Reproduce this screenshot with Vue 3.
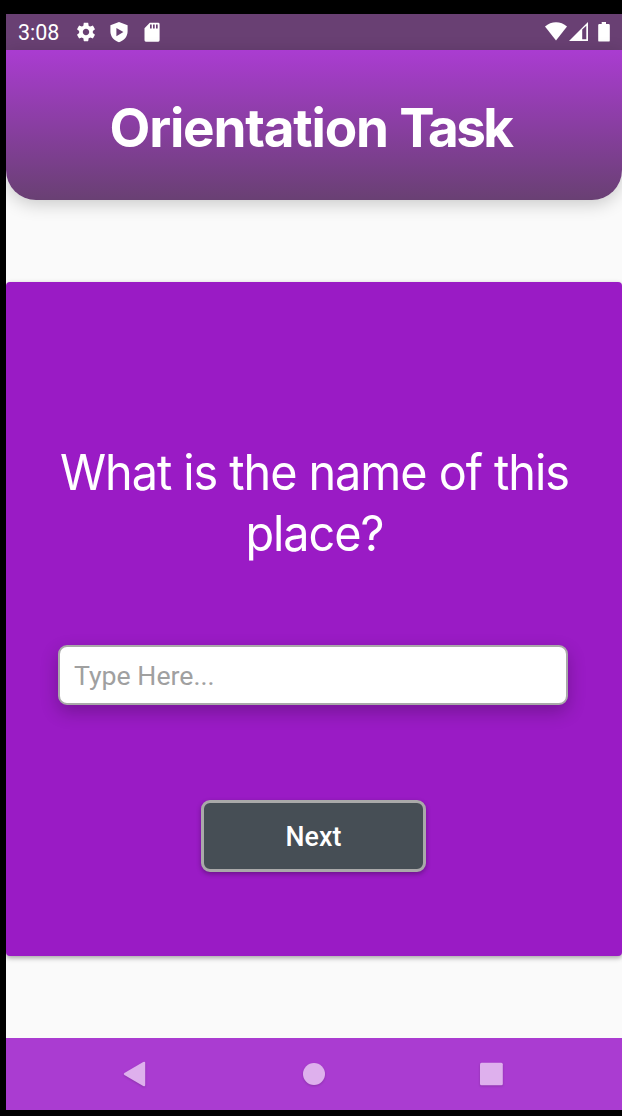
<script setup>
import { ref } from 'vue'

const answer = ref('')
</script>

<template>
  <div class="device">
    <main class="screen">
      <div class="status">
        <span class="clock">3:08</span>
        <svg class="gear" width="22" height="22" viewBox="0 0 24 24">
          <path d="M19.43 12.98c.04-.32.07-.64.07-.98s-.03-.66-.07-.98l2.11-1.65c.19-.15.24-.42.12-.64l-2-3.46c-.12-.22-.39-.3-.61-.22l-2.49 1c-.52-.4-1.08-.73-1.69-.98l-.38-2.65C14.46 2.18 14.25 2 14 2h-4c-.25 0-.46.18-.49.42l-.38 2.65c-.61.25-1.17.59-1.69.98l-2.49-1c-.23-.09-.49 0-.61.22l-2 3.46c-.13.22-.07.49.12.64l2.11 1.65c-.04.32-.07.65-.07.98s.03.66.07.98l-2.11 1.65c-.19.15-.24.42-.12.64l2 3.46c.12.22.39.3.61.22l2.49-1c.52.4 1.08.73 1.69.98l.38 2.65c.03.24.24.42.49.42h4c.25 0 .46-.18.49-.42l.38-2.65c.61-.25 1.17-.59 1.69-.98l2.49 1c.23.09.49 0 .61-.22l2-3.46c.12-.22.07-.49-.12-.64l-2.11-1.65zM12 15.5c-1.93 0-3.5-1.57-3.5-3.5s1.57-3.5 3.5-3.5 3.5 1.57 3.5 3.5-1.57 3.5-3.5 3.5z" />
        </svg>
        <svg class="shield" width="18" height="22" viewBox="0 0 18 22">
          <path fill-rule="evenodd" d="M9 1 17.6 4.3V10.5C17.6 15.6 14 19.6 9 21.2 4 19.6.4 15.6.4 10.5V4.3ZM6.4 7.1V15.2L13.4 11.1Z" />
        </svg>
        <svg class="card-icon" width="16" height="22" viewBox="0 0 16 22">
          <path fill-rule="evenodd" d="M5.8 1.8H14.2Q15.6 1.8 15.6 3.2V19.3Q15.6 20.7 14.2 20.7H1.9Q.5 20.7.5 19.3V7.2ZM6 3.6V7.6H7.7V3.6ZM9 3.6V7.6H10.7V3.6ZM12 3.6V7.6H13.7V3.6Z" />
        </svg>
        <svg class="wifi" width="22" height="20" viewBox="0 0 22 20">
          <path d="M0 4.4C6.2-1.3 15.8-1.3 22 4.4L11 18.4Z" />
        </svg>
        <svg class="signal" width="19" height="20" viewBox="0 0 19 20">
          <path fill-rule="evenodd" d="M0 19 19 0V19ZM13.2 7.6V17.3H17.3V3.8Z" />
        </svg>
        <svg class="battery" width="12" height="20" viewBox="0 0 12 20">
          <path d="M3.7 0H8V2H10.6Q11.8 2 11.8 3.2V18.4Q11.8 19.6 10.6 19.6H1.4Q.2 19.6.2 18.4V3.2Q.2 2 1.4 2H3.7Z" />
        </svg>
      </div>

      <header class="header">
        <h1>Orientation <span class="tight">Task</span></h1>
      </header>

      <section class="panel">
        <p class="question">What is the name of this<br />place?</p>
        <input v-model="answer" class="answer" type="text" placeholder="Type Here..." />
        <button class="next" type="button">Next</button>
      </section>

      <nav class="nav">
        <svg width="24" height="28" viewBox="0 0 24 28">
          <path d="M1.4 13.1 20.2 2.1Q22.2 1.2 22.2 3V25Q22.2 26.8 20.2 25.9L1.4 14.9Q0 14 1.4 13.1Z" />
        </svg>
        <svg width="24" height="28" viewBox="0 0 24 28"><circle cx="13" cy="14" r="11" /></svg>
        <svg width="24" height="28" viewBox="0 0 24 28"><rect x="1" y="2.7" width="22.8" height="22.6" rx="1.5" /></svg>
      </nav>
    </main>
  </div>
</template>

<style>
body {
  background: #000;
}
</style>

<style scoped>
.device {
  box-sizing: border-box;
  width: 622px;
  height: 1116px;
  padding: 14px 0 6px 6px;
  background: #000;
}
.screen {
  display: flex;
  flex-direction: column;
  height: 1096px;
  background: #fafafa;
  overflow: hidden;
}
.status {
  display: flex;
  align-items: center;
  flex: none;
  height: 36px;
  box-sizing: border-box;
  padding: 0 12px;
  background: #694073;
}
.status svg {
  flex: none;
  fill: #fff;
}
.clock {
  width: 57px;
  font: 21.5px/36px Roboto, sans-serif;
  color: #fff;
  padding-top: 2px;
}
.shield {
  margin-left: 13px;
}
.card-icon {
  margin-left: 16px;
}
.wifi {
  margin-left: auto;
}
.signal {
  margin-left: 2px;
}
.battery {
  margin-left: 10px;
}
.header {
  flex: none;
  height: 150px;
  border-radius: 0 0 30px 30px;
  background: linear-gradient(#aa3cd1, #694073);
  box-shadow: 0 4px 18px rgba(0, 0, 0, 0.2);
}
h1 {
  margin: 0;
  padding: 47px 7px 0 0;
  font: 700 53px/62px Inter, sans-serif;
  letter-spacing: -1.2px;
  text-align: center;
  color: #fff;
}
.tight {
  letter-spacing: -2.6px;
}
.panel {
  flex: none;
  display: flex;
  flex-direction: column;
  align-items: center;
  box-sizing: border-box;
  height: 674px;
  margin-top: 82px;
  padding-top: 161px;
  border-radius: 4px;
  background: #9a1bc5;
  box-shadow: 0 2px 5px rgba(0, 0, 0, 0.35);
}
.question {
  margin: 0;
  font: 400 49px/60.5px Inter, sans-serif;
  letter-spacing: -1.1px;
  text-align: center;
  white-space: nowrap;
  color: #fff;
  transform: scaleX(0.955);
}
.answer {
  box-sizing: border-box;
  width: 510px;
  height: 60px;
  margin: 81px 2px 0 0;
  padding: 2px 14px 0;
  border: 2px solid #a9a9a9;
  border-radius: 9px;
  background: #fff;
  box-shadow: 0 7px 18px rgba(0, 0, 0, 0.24);
  font: 26.7px Roboto, sans-serif;
  color: #333;
  outline: none;
}
.answer::placeholder {
  color: #a0a0a0;
}
.next {
  box-sizing: border-box;
  width: 225px;
  height: 72px;
  margin: 95px 1px 0 0;
  padding: 2px 0 0;
  border: 3px solid #a9a9a9;
  border-radius: 9px;
  background: #464e55;
  box-shadow: 0 2px 5px rgba(0, 0, 0, 0.3);
  font: 500 26.8px Roboto, sans-serif;
  color: #fff;
}
.nav {
  flex: none;
  display: flex;
  justify-content: space-between;
  align-items: center;
  box-sizing: border-box;
  height: 72px;
  margin-top: auto;
  padding: 0 119px 0 117px;
  background: #aa3cd1;
}
.nav svg {
  fill: #deb0ed;
  filter: drop-shadow(0 1px 1px rgba(0, 0, 0, 0.18));
}
</style>
